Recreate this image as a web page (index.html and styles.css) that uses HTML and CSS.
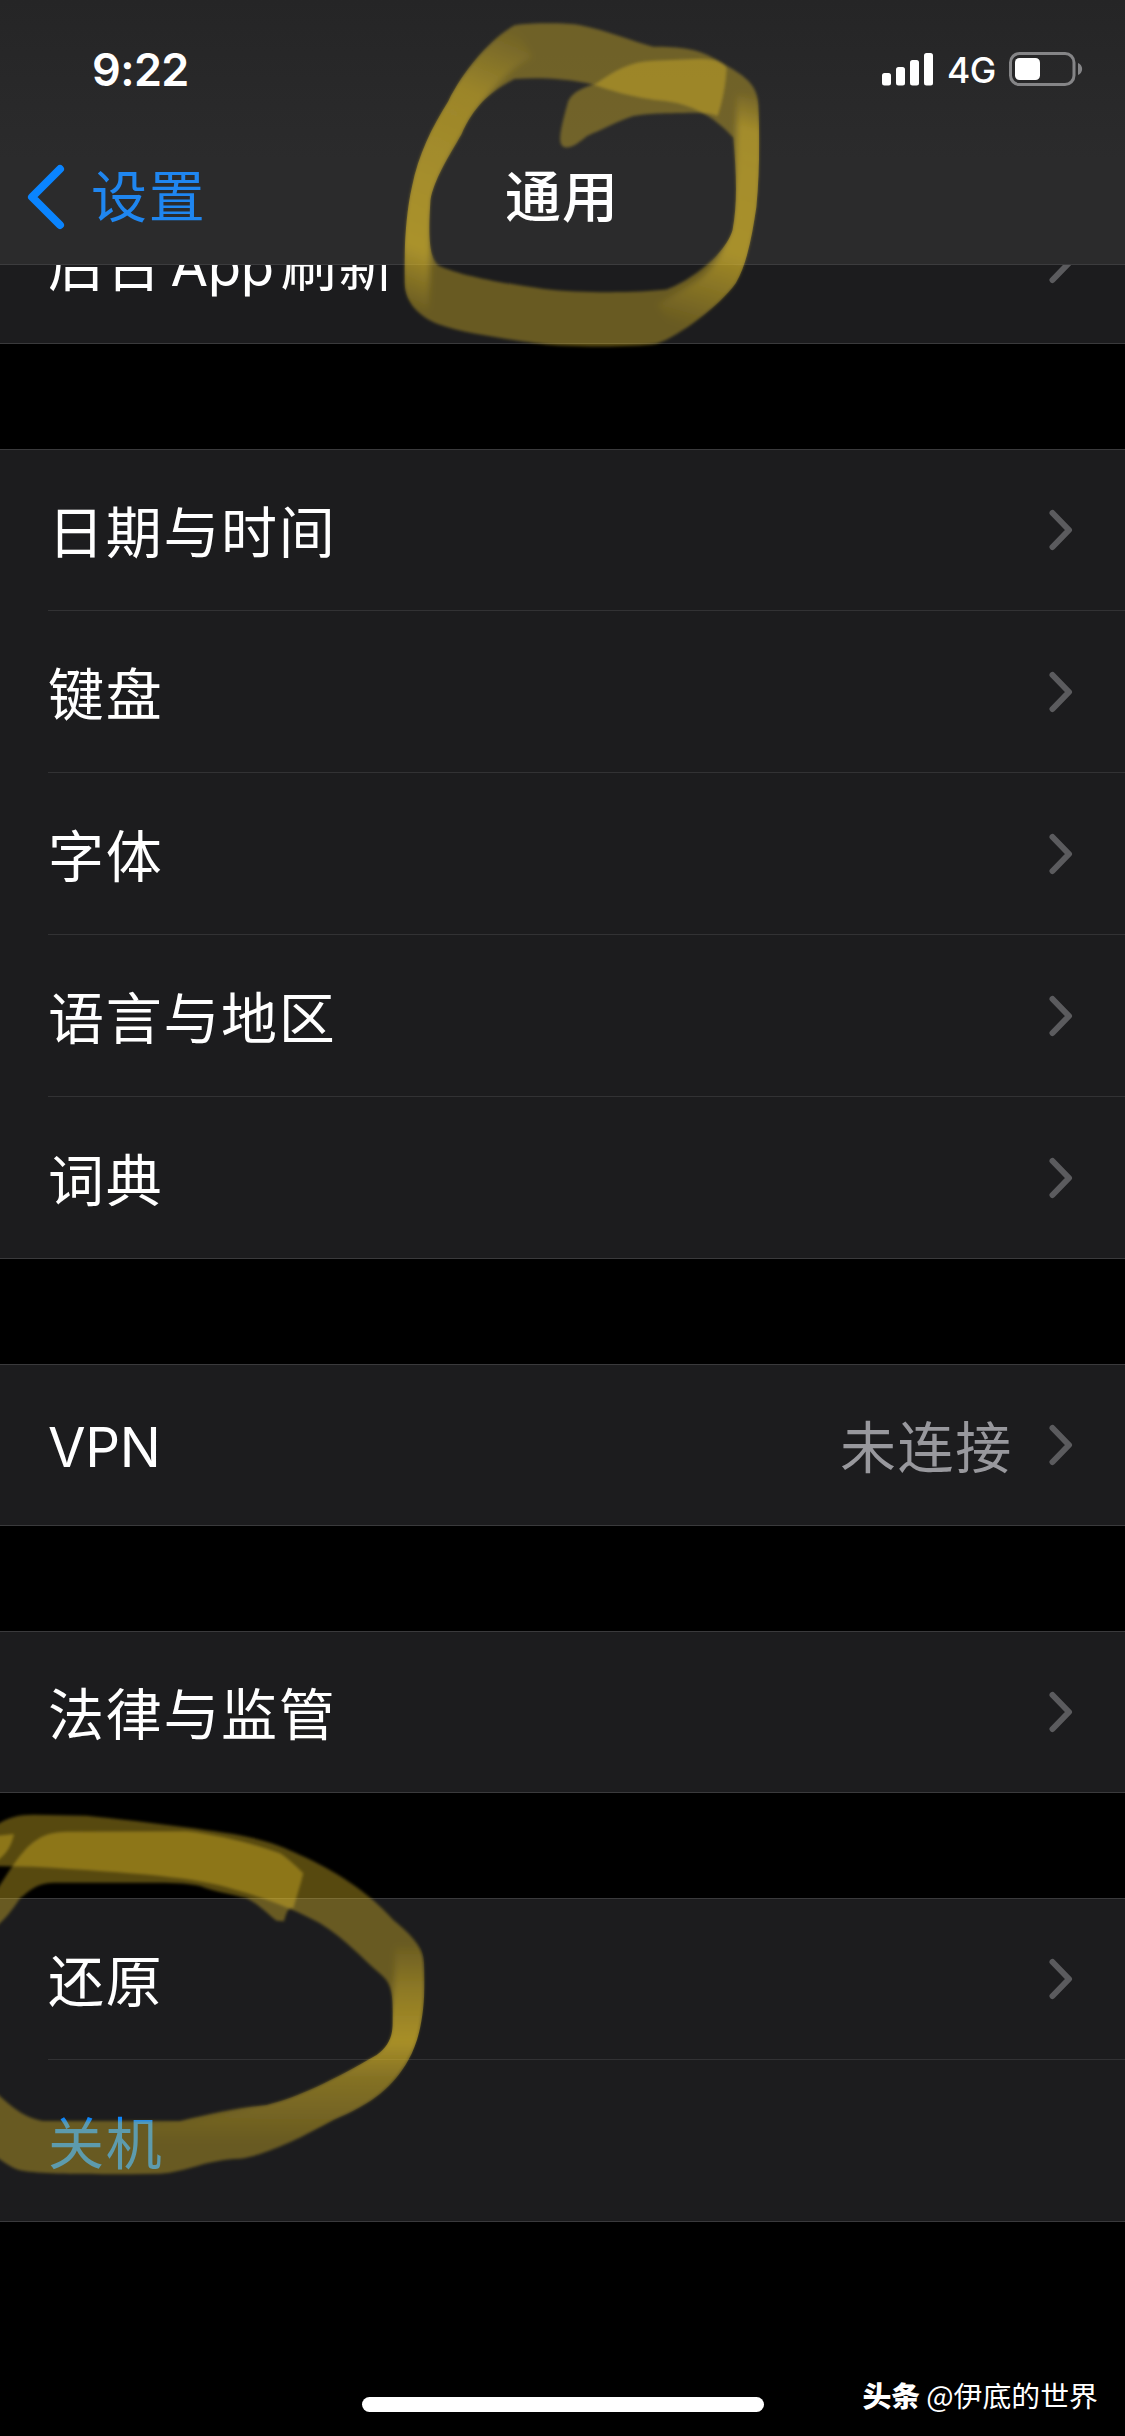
FILE: index.html
```html
<!DOCTYPE html>
<html lang="zh-CN">
<head>
<meta charset="utf-8">
<title>通用</title>
<link rel="stylesheet" href="styles.css">
</head>
<body>
<svg class="defs" width="0" height="0">
  <symbol id="chevron" viewBox="0 0 24 42"><path d="M3.5 4 L20 21 L3.5 38" fill="none" stroke="#5b5b5e" stroke-width="6" stroke-linecap="round" stroke-linejoin="round"/></symbol>
</svg>
<div class="screen">
  <header class="header">
    <div class="status">
      <span class="time">9:22</span>
      <div class="indicators">
        <svg class="signal" width="51" height="33" viewBox="0 0 51 33" fill="#fff">
          <rect x="0" y="20" width="9" height="12.5" rx="2.5"/><rect x="14" y="14" width="9" height="18.5" rx="2.5"/><rect x="28" y="7" width="9" height="25.5" rx="2.5"/><rect x="42" y="0" width="9" height="32.500" rx="2.5"/>
        </svg>
        <span class="network">4G</span>
        <svg class="battery" width="74" height="34" viewBox="0 0 74 34">
          <rect x="1.500" y="1.500" width="63.500" height="31" rx="9" fill="none" stroke="#858587" stroke-width="3"/>
          <rect x="6" y="6" width="25" height="22" rx="4.500" fill="#fff"/>
          <path d="M69 11 C74.500 13 74.500 21 69 23Z" fill="#858587"/>
        </svg>
      </div>
    </div>
    <nav class="nav">
      <a class="back">
        <svg width="38" height="66" viewBox="0 0 38 66"><path d="M33 5 L5 33 L33 61" fill="none" stroke="#0a84ff" stroke-width="8" stroke-linecap="round" stroke-linejoin="round"/></svg>
        <span>设置</span>
      </a>
      <h1 class="title">通用</h1>
      <span></span>
    </nav>
  </header>
  <main class="list">
    <section class="group clipped">
      <div class="row"><span class="label">后台<span class="latin">App</span>刷新</span><svg class="chev"><use href="#chevron"/></svg></div>
    </section>
    <section class="group">
      <div class="row"><span class="label">日期与时间</span><svg class="chev"><use href="#chevron"/></svg></div>
      <div class="row"><span class="label">键盘</span><svg class="chev"><use href="#chevron"/></svg></div>
      <div class="row"><span class="label">字体</span><svg class="chev"><use href="#chevron"/></svg></div>
      <div class="row"><span class="label">语言与地区</span><svg class="chev"><use href="#chevron"/></svg></div>
      <div class="row"><span class="label">词典</span><svg class="chev"><use href="#chevron"/></svg></div>
    </section>
    <section class="group">
      <div class="row"><span class="label vpn">VPN</span><span class="value">未连接</span><svg class="chev"><use href="#chevron"/></svg></div>
    </section>
    <section class="group">
      <div class="row"><span class="label">法律与监管</span><svg class="chev"><use href="#chevron"/></svg></div>
    </section>
    <section class="group">
      <div class="row"><span class="label">还原</span><svg class="chev"><use href="#chevron"/></svg></div>
      <div class="row"><span class="label action">关机</span></div>
    </section>
  </main>
  <footer class="footer">
    <span></span>
    <div class="home"></div>
    <div class="credit"><b>头条</b><span>@伊底的世界</span></div>
  </footer>

  <!-- highlighter circle round the page title -->
  <svg class="marker marker-title" viewBox="0 0 1200 1080">
    <defs>
      <filter id="soft" x="-10%" y="-10%" width="120%" height="120%"><feGaussianBlur stdDeviation="5"/></filter>
      <filter id="softer" filterUnits="userSpaceOnUse" x="-100" y="-100" width="1500" height="1400"><feGaussianBlur stdDeviation="9"/></filter>
      <linearGradient id="fade-left" gradientUnits="userSpaceOnUse" x1="440" y1="100" x2="90" y2="930">
        <stop offset="0" stop-color="#e8c42c" stop-opacity="0"/><stop offset=".25" stop-color="#e8c42c" stop-opacity=".36"/><stop offset=".8" stop-color="#e8c42c" stop-opacity=".48"/><stop offset="1" stop-color="#e8c42c" stop-opacity="0"/>
      </linearGradient>
      <linearGradient id="fade-right" gradientUnits="userSpaceOnUse" x1="1110" y1="270" x2="900" y2="980">
        <stop offset="0" stop-color="#e8c42c" stop-opacity="0"/><stop offset=".15" stop-color="#e8c42c" stop-opacity=".42"/><stop offset=".65" stop-color="#e8c42c" stop-opacity=".46"/><stop offset="1" stop-color="#e8c42c" stop-opacity="0"/>
      </linearGradient>
      <clipPath id="ring"><path clip-rule="evenodd" d="M400 70C450 62 560 62 600 70C680 85 760 120 820 135C900 135 960 140 1020 180C1080 215 1135 240 1138 310C1142 400 1142 520 1132 620C1120 700 1105 790 1070 850C1020 920 900 1010 830 1034C760 1045 560 1045 480 1034C400 1022 250 1005 170 975C110 950 70 910 68 850C66 740 72 640 90 560C110 460 150 380 200 300C250 200 330 110 400 70ZM400 233C330 270 280 310 240 400C200 470 155 540 146 600C140 700 140 770 170 797C240 830 390 855 490 868C600 882 780 880 860 870C940 840 1040 760 1060 690C1075 610 1072 520 1062 410C1000 340 930 310 860 300C760 290 700 270 640 250C560 232 470 228 400 233Z"/></clipPath>
    </defs>
    <path class="ink" fill-rule="evenodd" filter="url(#soft)" d="M400 70C450 62 560 62 600 70C680 85 760 120 820 135C900 135 960 140 1020 180C1080 215 1135 240 1138 310C1142 400 1142 520 1132 620C1120 700 1105 790 1070 850C1020 920 900 1010 830 1034C760 1045 560 1045 480 1034C400 1022 250 1005 170 975C110 950 70 910 68 850C66 740 72 640 90 560C110 460 150 380 200 300C250 200 330 110 400 70ZM400 233C330 270 280 310 240 400C200 470 155 540 146 600C140 700 140 770 170 797C240 830 390 855 490 868C600 882 780 880 860 870C940 840 1040 760 1060 690C1075 610 1072 520 1062 410C1000 340 930 310 860 300C760 290 700 270 640 250C560 232 470 228 400 233Z"/>
    <path class="ink" filter="url(#soft)" d="M555 440C530 435 535 400 560 310C570 270 610 260 650 245C700 210 750 180 820 178L960 172C1010 172 1035 185 1042 200C1040 250 1030 300 1015 345C990 335 970 335 940 335C860 337 820 335 760 345C700 365 670 385 620 405C600 420 580 440 555 440Z"/>
    <g clip-path="url(#ring)">
      <path class="stroke wide" stroke="url(#fade-left)" filter="url(#softer)" d="M430 120C330 170 250 280 205 370C150 460 107 540 98 650L88 930"/>
      <path class="stroke wide" stroke="url(#fade-right)" filter="url(#softer)" d="M1125 280C1125 440 1120 560 1105 680C1080 780 1050 830 990 880L860 960"/>
    </g>
  </svg>

  <!-- highlighter circle round the reset row -->
  <svg class="marker marker-reset" viewBox="0 0 1350 1320">
    <defs>
      <clipPath id="loop"><path d="M950 160H1180L1240 440C1268 475 1272 500 1272 520C1278 640 1265 740 1225 810C1180 890 1120 940 1000 990C900 1045 800 1095 720 1108L450 1158L450 993L540 993C640 970 700 955 800 945C900 920 1000 870 1130 795C1165 770 1178 740 1178 700C1178 640 1182 590 1150 560L950 400Z"/></clipPath>
      <linearGradient id="fade-loop" gradientUnits="userSpaceOnUse" x1="0" y1="450" x2="0" y2="1060">
        <stop offset="0" stop-color="#e8c42c" stop-opacity="0"/><stop offset=".25" stop-color="#e8c42c" stop-opacity=".3"/><stop offset=".5" stop-color="#e8c42c" stop-opacity=".5"/><stop offset=".68" stop-color="#e8c42c" stop-opacity=".22"/><stop offset="1" stop-color="#e8c42c" stop-opacity="0"/>
      </linearGradient>
    </defs>
    <path class="ink" filter="url(#soft)" d="M-30 120C10 85 50 74 100 74L260 77C360 87 560 110 700 132C800 150 850 170 900 195C1000 240 1100 300 1180 390C1240 440 1268 470 1270 520C1276 640 1263 740 1223 810C1178 890 1120 940 1000 990C900 1045 800 1095 720 1106C620 1108 560 1146 480 1151C300 1154 120 1154 60 1141C30 1131 10 1116 -30 1086L-30 890C40 960 80 985 130 993L540 993C640 970 700 955 800 945C900 920 1000 870 1130 795C1165 770 1178 740 1178 700C1178 640 1182 590 1150 560C1080 500 1040 450 960 400C900 365 800 325 700 298C600 262 400 248 100 230L-30 228Z"/>
    <path class="ink" filter="url(#soft)" d="M-30 330C20 260 60 180 110 150C140 128 170 125 220 125L560 124C650 134 760 160 840 190C870 210 895 235 910 250C900 290 890 320 880 355C862 350 858 375 852 394L830 392C805 375 780 345 740 325C690 310 650 308 600 288C560 278 500 278 460 278L160 278C110 280 90 300 60 325C30 370 10 395 -30 425Z"/>
    <path class="ink" filter="url(#soft)" d="M-30 140L42 132C35 165 20 200 -30 225Z"/>
    <g clip-path="url(#loop)"><path class="stroke wider" stroke="url(#fade-loop)" filter="url(#softer)" d="M1255 470C1255 620 1240 700 1200 770C1150 860 1050 910 950 950C850 1000 700 1050 450 1075"/></g>
  </svg>
</div>
</body>
</html>
```
FILE: styles.css
```css
* { box-sizing: border-box; }
body {
  margin: 0;
  background: #000;
  color: #fff;
  font-family: Inter, "Noto Sans CJK SC", sans-serif;
}
.defs { display: block; position: absolute; }
.screen {
  position: relative;
  width: 1125px;
  height: 2436px;
  overflow: hidden;
  display: flex;
  flex-direction: column;
}
.header {
  height: 265px;
  background: linear-gradient(#252526, #2b2b2c 60%);
  border-bottom: 1px solid #3c3c3e;
  display: flex;
  flex-direction: column;
}
.status {
  height: 132px;
  padding: 6px 43px 0 92px;
  display: flex;
  justify-content: space-between;
  align-items: center;
}
.time { font-size: 45px; font-weight: 600; letter-spacing: -0.6px; }
.indicators { display: flex; align-items: center; }
.network { font-size: 35.500px; font-weight: 450; width: 49px; letter-spacing: -0.5px; margin: 2px 12px 0 14px; }
.battery { margin-left: 1px; margin-right: -1px; }
.nav {
  height: 129px;
  padding: 0 27px;
  display: grid;
  grid-template-columns: 1fr auto 1fr;
  align-items: center;
}
.back { display: flex; align-items: center; gap: 26px; color: #1f86f0; font-size: 56px; }
.back span, .label, .value { letter-spacing: 1.7px; line-height: 80px; }
.title { margin: 0; font-size: 56px; font-weight: 500; line-height: 80px; letter-spacing: 1px; padding-right: 1px; }
.list { display: flex; flex-direction: column; gap: 105px; }
.group { background: #1c1c1e; border: solid #3a3a3c; border-width: 1px 0; display: flex; flex-direction: column; }
.clipped { height: 79px; overflow: hidden; justify-content: flex-end; border-top: 0; }
.row {
  height: 162px;
  flex: none;
  margin-left: 48px;
  padding-right: 52px;
  border-bottom: 1px solid #323234;
  display: flex;
  align-items: center;
}
.row:first-child { height: 161px; }
.row:last-child { height: 161px; border-bottom: 0; }
.row:only-child { height: 160px; }
.label, .value { padding-top: 6px; font-size: 56px; }
.label { flex: 1; }
.value { color: #98989d; margin-right: 36px; }
.label.vpn { letter-spacing: -0.3px; font-size: 54.500px; padding-top: 4px; }
.latin { font-size: 54.500px; letter-spacing: -0.3px; margin: 0 7px 0 7px; }
.action { color: #0a84ff; }
.chev { width: 24px; height: 42px; }
.footer {
  flex: 1;
  padding: 130px 27px 0;
  display: grid;
  grid-template-columns: 1fr 402px 1fr;
  align-items: center;
}
.home { height: 15px; border-radius: 8px; background: #fff; margin-top: 20px; }
.credit { display: flex; justify-content: flex-end; gap: 6px; font-family: "Noto Sans CJK SC", sans-serif; font-size: 28.900px; line-height: 40px; white-space: nowrap; }
.credit b { font-weight: 900; }
.marker { position: absolute; pointer-events: none; }
.marker-title { left: 382px; top: 2px; width: 397px; height: 357px; }
.marker-reset { left: 0; top: 1790px; width: 450px; height: 440px; }
.ink { fill: rgba(230, 192, 38, 0.38); }
.stroke { fill: none; }
.wide { stroke-width: 105; }
.wider { stroke-width: 140; }
```
